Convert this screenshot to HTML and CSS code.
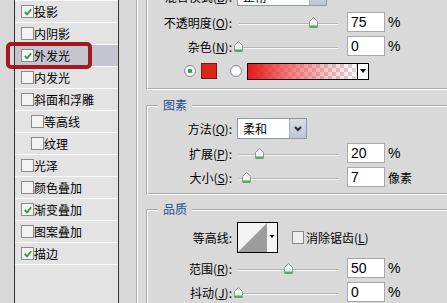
FILE: index.html
```
<!DOCTYPE html>
<html>
<head>
    <meta charset="UTF-8">
    <title>图层样式 - 外发光</title>
    <link rel="stylesheet" href="styles.css">
</head>
<body>
<div class="dialog">
    <div class="gutter"></div>

    <ul class="style-list">
        <li><span class="cb on"><svg viewBox="0 0 11 11"><path d="M2 5.5 L4.5 8 L9 2.5"/></svg></span>投影</li>
        <li><span class="cb"></span>内阴影</li>
        <li class="current"><span class="cb on"><svg viewBox="0 0 11 11"><path d="M2 5.5 L4.5 8 L9 2.5"/></svg></span>外发光</li>
        <li><span class="cb"></span>内发光</li>
        <li><span class="cb"></span>斜面和浮雕</li>
        <li class="sub"><span class="cb"></span>等高线</li>
        <li class="sub"><span class="cb"></span>纹理</li>
        <li><span class="cb"></span>光泽</li>
        <li><span class="cb"></span>颜色叠加</li>
        <li><span class="cb on"><svg viewBox="0 0 11 11"><path d="M2 5.5 L4.5 8 L9 2.5"/></svg></span>渐变叠加</li>
        <li><span class="cb"></span>图案叠加</li>
        <li><span class="cb on"><svg viewBox="0 0 11 11"><path d="M2 5.5 L4.5 8 L9 2.5"/></svg></span>描边</li>
    </ul>

    <div class="panel">
        <!-- 结构 -->
        <div class="group g-blend">
            <div class="row row-mix">
                <label class="lbl">混合模式(<u>B</u>):</label>
                <div class="select select-mix"><span class="val">正常</span><span class="sel-btn"><svg width="8" height="6"><path d="M1 1 L4 4 L7 1"/></svg></span></div>
            </div>
            <div class="row">
                <label class="lbl">不透明度(<u>O</u>):</label>
                <div class="slider"><span class="thumb" style="left:70px"><svg width="9" height="11" viewBox="0 0 9 11"><path class="t-body" d="M0.5 4.5 L4.5 0.5 L8.5 4.5 V10.5 H0.5 Z"/><path class="t-base" d="M1 9.5 H8"/></svg></span></div>
                <span class="num">75</span><span class="unit">%</span>
            </div>
            <div class="row">
                <label class="lbl">杂色(<u>N</u>):</label>
                <div class="slider"><span class="thumb" style="left:-5px"><svg width="9" height="11" viewBox="0 0 9 11"><path class="t-body" d="M0.5 4.5 L4.5 0.5 L8.5 4.5 V10.5 H0.5 Z"/><path class="t-base" d="M1 9.5 H8"/></svg></span></div>
                <span class="num">0</span><span class="unit">%</span>
            </div>
            <div class="row row-color">
                <span class="radio on"></span>
                <span class="swatch"></span>
                <span class="radio radio-2"></span>
                <div class="grad"><span class="grad-fill"></span><span class="grad-btn"></span></div>
            </div>
        </div>

        <!-- 图素 -->
        <div class="group g-elem">
            <div class="legend">图素</div>
            <div class="row row-method">
                <label class="lbl">方法(<u>Q</u>):</label>
                <div class="select select-method"><span class="val">柔和</span><span class="sel-btn"><svg width="8" height="6"><path d="M1 1 L4 4 L7 1"/></svg></span></div>
            </div>
            <div class="row">
                <label class="lbl">扩展(<u>P</u>):</label>
                <div class="slider"><span class="thumb" style="left:16px"><svg width="9" height="11" viewBox="0 0 9 11"><path class="t-body" d="M0.5 4.5 L4.5 0.5 L8.5 4.5 V10.5 H0.5 Z"/><path class="t-base" d="M1 9.5 H8"/></svg></span></div>
                <span class="num">20</span><span class="unit">%</span>
            </div>
            <div class="row">
                <label class="lbl">大小(<u>S</u>):</label>
                <div class="slider"><span class="thumb" style="left:3px"><svg width="9" height="11" viewBox="0 0 9 11"><path class="t-body" d="M0.5 4.5 L4.5 0.5 L8.5 4.5 V10.5 H0.5 Z"/><path class="t-base" d="M1 9.5 H8"/></svg></span></div>
                <span class="num">7</span><span class="unit unit-cjk">像素</span>
            </div>
        </div>

        <!-- 品质 -->
        <div class="group g-quality">
            <div class="legend">品质</div>
            <div class="row row-contour">
                <label class="lbl">等高线:</label>
                <div class="contour">
                    <svg width="39" height="29" viewBox="0 0 39 29">
                        <rect width="39" height="29" fill="#f4f4f4"/>
                        <path d="M0 29 L29 0 L29 29 Z" fill="#9c9c9c"/>
                        <path d="M31.5 12 h5 l-2.5 3 z" fill="#000"/>
                    </svg>
                </div>
                <span class="cb cb-anti"></span><span class="anti">消除锯齿(<u>L</u>)</span>
            </div>
            <div class="row">
                <label class="lbl">范围(<u>R</u>):</label>
                <div class="slider"><span class="thumb" style="left:45px"><svg width="9" height="11" viewBox="0 0 9 11"><path class="t-body" d="M0.5 4.5 L4.5 0.5 L8.5 4.5 V10.5 H0.5 Z"/><path class="t-base" d="M1 9.5 H8"/></svg></span></div>
                <span class="num">50</span><span class="unit">%</span>
            </div>
            <div class="row">
                <label class="lbl">抖动(<u>J</u>):</label>
                <div class="slider"><span class="thumb" style="left:-5px"><svg width="9" height="11" viewBox="0 0 9 11"><path class="t-body" d="M0.5 4.5 L4.5 0.5 L8.5 4.5 V10.5 H0.5 Z"/><path class="t-base" d="M1 9.5 H8"/></svg></span></div>
                <span class="num">0</span><span class="unit">%</span>
            </div>
        </div>
    </div>

    <div class="highlight"></div>
</div>
</body>
</html>
```
FILE: styles.css
```
body {
    margin: 0;
    background: #d9d9d9;
    font-family: 'Noto Sans CJK SC', sans-serif;
    font-size: 12px;
    color: #000;
    overflow: hidden;
}

.dialog {
    position: relative;
    display: flex;
    width: 447px;
    height: 303px;
    overflow: hidden;
}

.gutter {
    width: 14px;
    flex-shrink: 0;
}

/* 左侧样式列表 */
.style-list {
    width: 103px;
    flex-shrink: 0;
    margin: 0;
    padding: 0;
    list-style: none;
    background: #e3e3e3;
    border-left: 1px solid #303030;
    border-right: 1px solid #303030;
}

.style-list li {
    display: flex;
    align-items: center;
    height: 21px;
    padding-left: 6px;
    border-bottom: 1px solid #fbfbfb;
    line-height: 21px;
}

.style-list li:first-child {
    border-top: 1px solid #fbfbfb;
}

.style-list li.sub {
    padding-left: 16px;
}

.style-list li.current {
    background: #c5c5cf;
}

.cb {
    display: inline-flex;
    align-items: center;
    justify-content: center;
    width: 13px;
    height: 13px;
    box-sizing: border-box;
    border: 1px solid #8a8a8a;
    background: #f3f3f3;
    flex-shrink: 0;
}

.cb svg {
    width: 10px;
    height: 10px;
}

.cb svg path {
    fill: none;
    stroke: #2d9c3d;
    stroke-width: 2;
}

/* 右侧面板 */
.panel {
    flex: 1;
    margin-left: 17px;
    margin-top: -40px;
    padding: 8px 0 0 8px;
    border-left: 2px groove #fff;
    border-top: 2px groove #fff;
}

.group {
    border: 2px groove #fff;
    border-right: none;
}

.g-blend {
    padding: 14px 0 4px 0;
}

.g-elem {
    margin-top: 15px;
    padding-bottom: 4px;
}

.g-quality {
    margin-top: 14px;
}

.legend {
    width: fit-content;
    margin: -9px 0 0 10px;
    padding: 0 5px;
    height: 14px;
    line-height: 14px;
    background: #d9d9d9;
    color: #1d4f91;
}

.row {
    display: flex;
    align-items: center;
    height: 24px;
}

.row-mix {
    height: 20px;
    margin-bottom: 4px;
}

.row-color {
    height: 26px;
}

.row-method {
    height: 25px;
    margin-top: 4px;
}

.row-contour {
    height: 32px;
    margin-top: 5px;
    margin-bottom: 3px;
}

.lbl {
    width: 84px;
    margin-right: 5px;
    text-align: right;
    white-space: nowrap;
    flex-shrink: 0;
}

/* 下拉框 */
.select {
    display: flex;
    height: 21px;
    box-sizing: border-box;
    border: 1px solid #8e99a8;
    background: #fff;
}

.select .val {
    flex: 1;
    padding-left: 5px;
    line-height: 19px;
}

.select-mix {
    width: 90px;
    height: 20px;
}

.select-method {
    width: 70px;
}

.sel-btn {
    display: flex;
    align-items: center;
    justify-content: center;
    width: 16px;
    background: linear-gradient(#d9dde6, #bfc5d1);
    border-left: 1px solid #a9b0bd;
}

.sel-btn svg path {
    fill: none;
    stroke: #1e2c48;
    stroke-width: 2;
}

/* 滑块 */
.slider {
    position: relative;
    width: 99px;
    height: 24px;
    margin-left: 2px;
    flex-shrink: 0;
}

.slider::before {
    content: "";
    position: absolute;
    left: 0;
    right: 0;
    top: 13px;
    height: 1px;
    border-top: 1px solid #b4b4b4;
    background: #f7f7f7;
}

.thumb {
    position: absolute;
    top: 7px;
    width: 9px;
    height: 11px;
}

.thumb svg {
    display: block;
}

.t-body {
    fill: #f1f1f1;
    stroke: #8d998e;
}

.t-base {
    stroke: #44ad62;
    stroke-width: 2;
}

.num {
    width: 38px;
    height: 20px;
    box-sizing: border-box;
    margin-left: 9px;
    padding-left: 3px;
    border: 1px solid #a9a9a9;
    background: #fff;
    font-family: 'Liberation Sans', sans-serif;
    font-size: 14px;
    line-height: 18px;
    flex-shrink: 0;
}

.unit {
    margin-left: 3px;
    font-family: 'Liberation Sans', sans-serif;
    font-size: 14px;
}

.unit-cjk {
    font-family: 'Noto Sans CJK SC', sans-serif;
    font-size: 12px;
}

/* 颜色 */
.radio {
    width: 12px;
    height: 12px;
    box-sizing: border-box;
    border: 1px solid #7f8a96;
    border-radius: 50%;
    background: #fafafa;
    margin-left: 36px;
    flex-shrink: 0;
}

.radio.on {
    background: radial-gradient(circle, #37a04d 0 2px, #fafafa 2.5px);
}

.radio-2 {
    margin-left: 13px;
}

.swatch {
    width: 16px;
    height: 16px;
    box-sizing: border-box;
    margin-left: 5px;
    border: 1px solid #7a1a12;
    background: #d8261a;
}

.grad {
    display: flex;
    width: 122px;
    height: 17px;
    box-sizing: border-box;
    margin-left: 5px;
    border: 1px solid #000;
}

.grad-fill {
    flex: 1;
    background:
        linear-gradient(to right, #e41a1a 0%, rgba(240, 60, 60, 0.7) 35%, rgba(255, 255, 255, 0) 100%),
        conic-gradient(#d7d7d7 25%, #fff 0 50%, #d7d7d7 0 75%, #fff 0) 0 0 / 8px 8px;
}

.grad-btn {
    position: relative;
    width: 10px;
    border-left: 1px solid #000;
    background: #fff;
}

.grad-btn::after {
    content: "";
    position: absolute;
    left: 2px;
    top: 5px;
    border-left: 3px solid transparent;
    border-right: 3px solid transparent;
    border-top: 4px solid #000;
}

/* 等高线 */
.contour {
    width: 41px;
    height: 31px;
    box-sizing: border-box;
    border: 1px solid #000;
    flex-shrink: 0;
}

.contour svg {
    display: block;
}

.cb-anti {
    width: 12px;
    margin-left: 14px;
    background: #eeeeee;
}

.anti {
    margin-left: 2px;
}

/* 标注框 */
.highlight {
    position: absolute;
    left: 6px;
    top: 42px;
    width: 86px;
    height: 27px;
    box-sizing: border-box;
    border: 4px solid #a3191f;
    border-radius: 5px;
}
```
